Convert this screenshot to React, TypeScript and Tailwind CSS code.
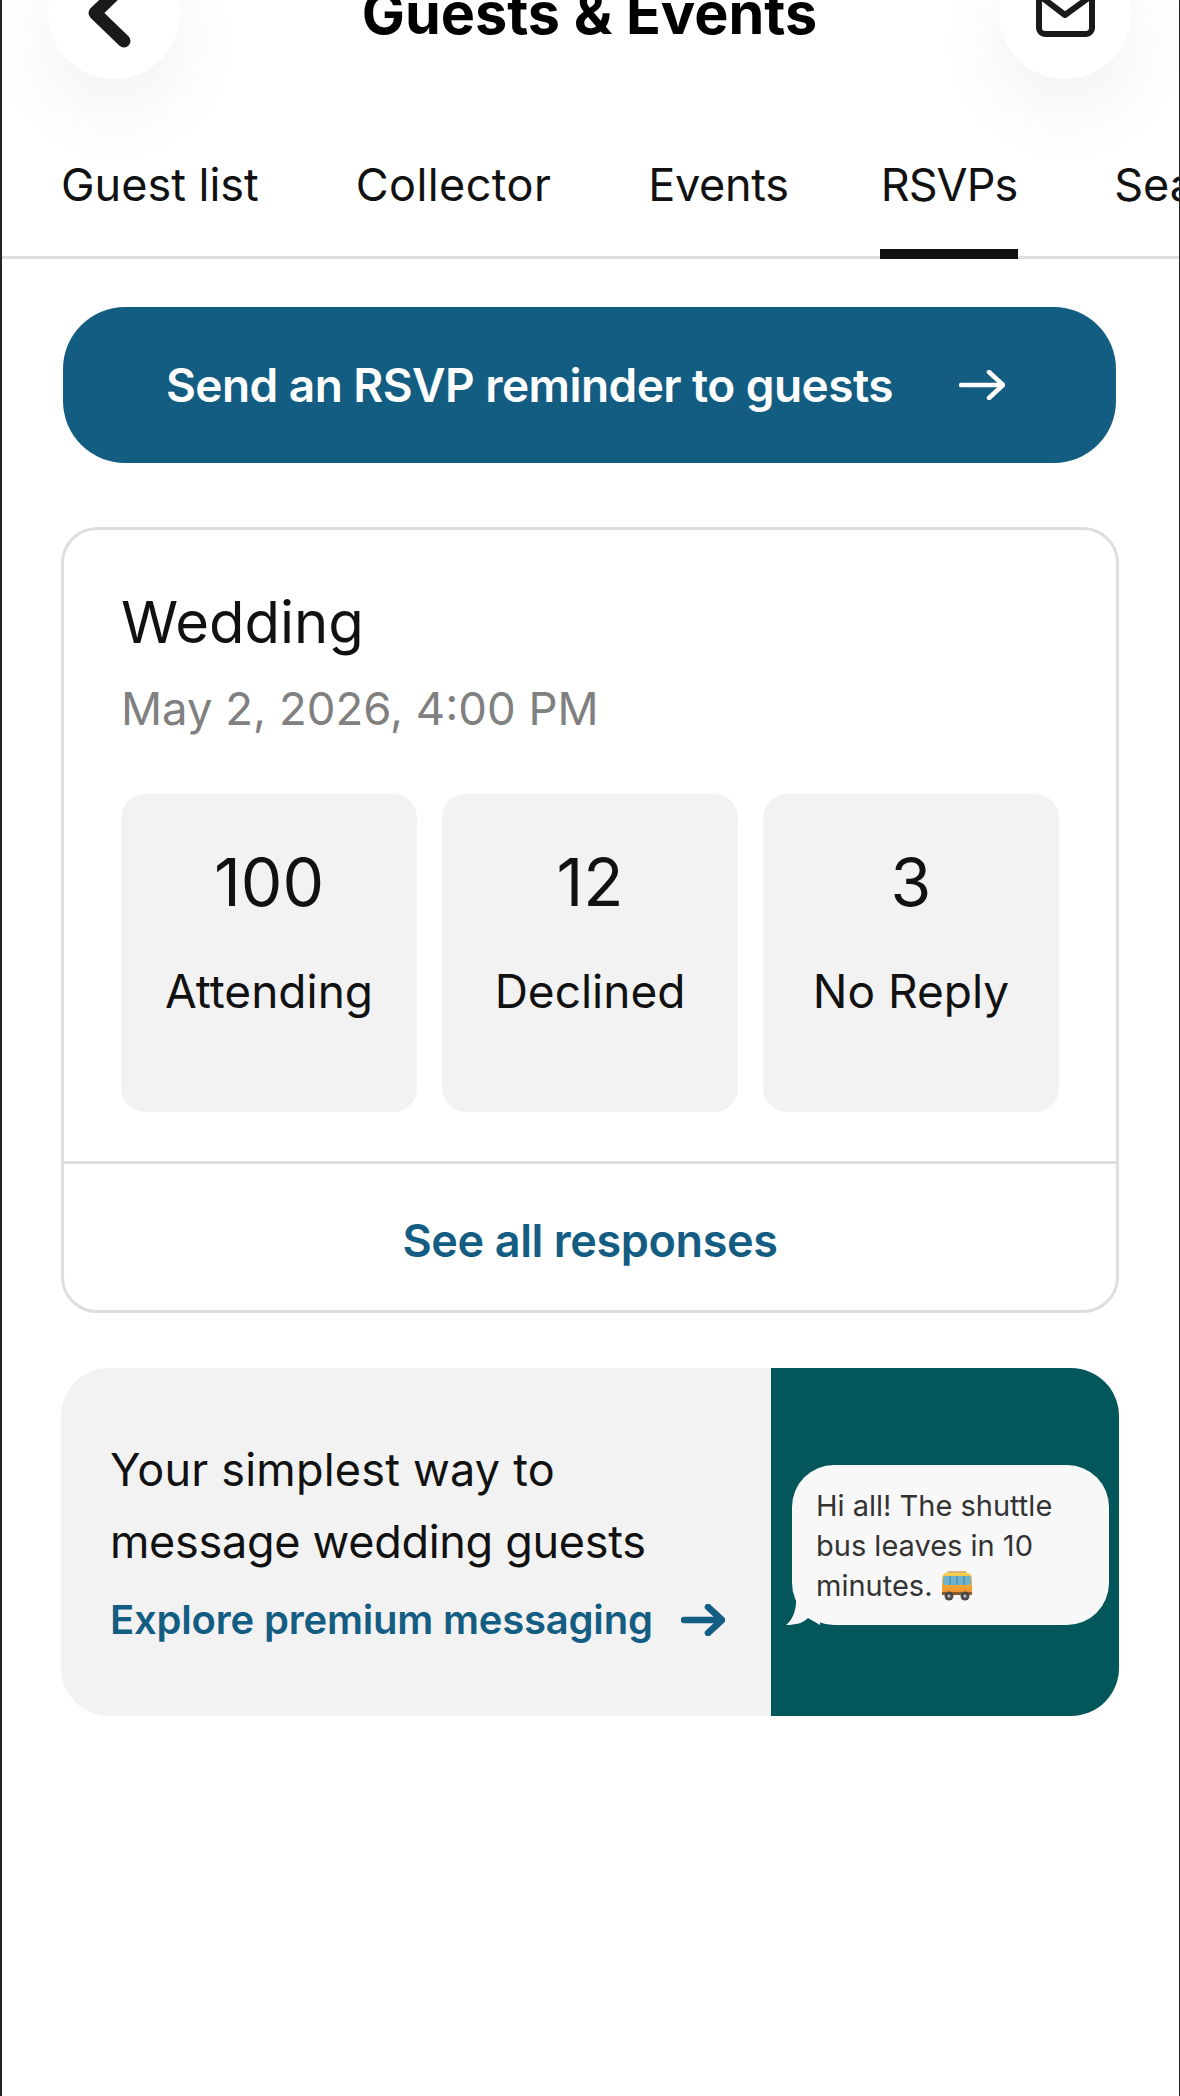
const sans = "font-['Inter',sans-serif]";

function Tile({ n, label }: { n: string; label: string }) {
  return (
    <div className="flex-1 h-[318px] rounded-[24px] bg-[#f2f2f2] flex flex-col items-center pt-[49px]">
      <div className="text-[66px] leading-[78px] text-[#111]">{n}</div>
      <div className="mt-[42px] text-[46px] leading-[56px] text-[#111]">{label}</div>
    </div>
  );
}

export default function App() {
  return (
    <div className={`${sans} relative w-[1180px] h-[2096px] overflow-hidden bg-white border-l-2 border-r border-[#222]`}>
      {/* top bar, scrolled partly off the screen */}
      <div className="-mt-[53px] flex items-center justify-between pl-[46px] pr-[48px] h-[132px]">
        <div className="w-[132px] h-[132px] rounded-full bg-white shadow-[0_30px_80px_rgba(0,0,0,0.06)] flex items-center justify-center">
          <svg width="60" height="80" viewBox="0 0 60 80" fill="none" stroke="#1a1a1a" strokeWidth="13" strokeLinecap="round" strokeLinejoin="round">
            <path d="M40 12 L11 40 L40 68" />
          </svg>
        </div>
        <div className="text-[57.5px] leading-[60px] font-bold text-black">Guests &amp; Events</div>
        <div className="w-[132px] h-[132px] rounded-full bg-white shadow-[0_30px_80px_rgba(0,0,0,0.06)] flex items-center justify-center">
          <svg width="66" height="52" viewBox="0 0 66 52" fill="none" stroke="#1a1a1a" strokeWidth="6" strokeLinejoin="round">
            <rect x="7" y="8" width="53" height="39" rx="6" />
            <path d="M8 9 L33 28 L59 9" />
          </svg>
        </div>
      </div>

      <div className="mt-[67px] h-[113px] border-b-[3px] border-[#dedede] flex pl-[59px] gap-[97px] whitespace-nowrap text-[45px] leading-[78px] text-[#111]">
        <span>Guest list</span>
        <span className="tracking-[0.4px]">Collector</span>
        <span className="tracking-[-0.3px]">Events</span>
        <span className="relative -ml-[5px] tracking-[-1px]">
          RSVPs
          <span className="absolute -left-[1px] -right-[1px] top-[103px] h-[10px] bg-[#111]" />
        </span>
        <span>Seating</span>
      </div>

      <div className="pl-[59px] pr-[60px] pt-[48px]">
        <div className="ml-[2px] mr-[3px] h-[156px] rounded-[62px] bg-[#135d83] flex items-center justify-center gap-[66px] pr-[8px] text-white text-[46px] font-semibold tracking-[-0.55px]">
          <span>Send an RSVP reminder to guests</span>
          <svg width="46" height="30" viewBox="0 0 46 30" fill="none" stroke="#fff" strokeWidth="4.5" strokeLinecap="round" strokeLinejoin="round">
            <path d="M2 15 H43" />
            <path d="M30 2 L44 15 L30 28" />
          </svg>
        </div>

        <div className="mt-[64px] h-[786px] rounded-[36px] border-[3px] border-[#dedede]">
          <div className="px-[57px] pt-[56px]">
            <div className="text-[58px] leading-[72px] text-[#111]">Wedding</div>
            <div className="mt-[23px] text-[45.5px] leading-[56px] text-[#808080]">May 2, 2026, 4:00 PM</div>
            <div className="mt-[57px] flex gap-[25px]">
              <Tile n="100" label="Attending" />
              <Tile n="12" label="Declined" />
              <Tile n="3" label="No Reply" />
            </div>
          </div>
          <div className="mt-[49px] border-t-[3px] border-[#dedede] h-[148px] pt-[9px] flex items-center justify-center text-[45px] font-semibold tracking-[-0.4px] text-[#135d83]">
            See all responses
          </div>
        </div>

        <div className="mt-[55px] h-[348px] rounded-[48px] overflow-hidden flex bg-[#f2f2f2]">
          <div className="w-[710px] pl-[49px] pt-[66px]">
            <div className="text-[45px] leading-[72px] text-[#111]">
              <div className="tracking-[0.2px]">Your simplest way to</div>
              <div className="tracking-[-0.3px]">message wedding guests</div>
            </div>
            <div className="mt-[14px] flex items-center gap-[28px] text-[40px] leading-[56px] font-semibold tracking-[-0.2px] text-[#135d83]">
              <span>Explore premium messaging</span>
              <svg width="44" height="32" viewBox="0 0 44 32" fill="none" stroke="#135d83" strokeWidth="6.5" strokeLinecap="round" strokeLinejoin="round">
                <path d="M3 16 H40" />
                <path d="M27 3 L41 16 L27 29" />
              </svg>
            </div>
          </div>
          <div className="flex-1 bg-[#03575b] flex items-center justify-end pr-[10px] pt-[5px]">
            <div className="relative w-[317px] h-[160px] rounded-[42px] bg-[#f8f8f8] pl-[24px] pt-[21px] text-[29px] leading-[40px] text-[#333]">
              <svg className="absolute -left-[6px] bottom-0" width="34" height="30" viewBox="0 0 34 30">
                <path d="M10 0 C11 12 8 24 0 30 C10 30 17 28 22 23 L34 30 L34 0 Z" fill="#f8f8f8" />
              </svg>
              <span className="relative">
                Hi all! The shuttle
                <br />
                bus leaves in 10
                <br />
                minutes.{" "}
                <svg className="inline-block align-[-5px]" width="32" height="30" viewBox="0 0 32 30">
                  <defs>
                    <linearGradient id="busBody" x1="0" y1="0" x2="0" y2="1">
                      <stop offset="0" stopColor="#f7d04a" />
                      <stop offset="1" stopColor="#ec8a2c" />
                    </linearGradient>
                  </defs>
                  <rect x="6" y="0" width="20" height="4" rx="2" fill="#d9b777" />
                  <rect x="1" y="2" width="30" height="22" rx="5" fill="url(#busBody)" />
                  <rect x="2" y="5" width="28" height="9" rx="2" fill="#6fb4cf" />
                  <path d="M9 5 V14 M16 5 V14 M23 5 V14" stroke="#4d7f94" strokeWidth="1" />
                  <rect x="1" y="21" width="30" height="3" fill="#8a5a2c" />
                  <circle cx="8" cy="25" r="4.5" fill="#4a4a4a" />
                  <circle cx="24" cy="25" r="4.5" fill="#4a4a4a" />
                  <circle cx="8" cy="25" r="1.6" fill="#bbb" />
                  <circle cx="24" cy="25" r="1.6" fill="#bbb" />
                </svg>
              </span>
            </div>
          </div>
        </div>
      </div>
    </div>
  );
}
